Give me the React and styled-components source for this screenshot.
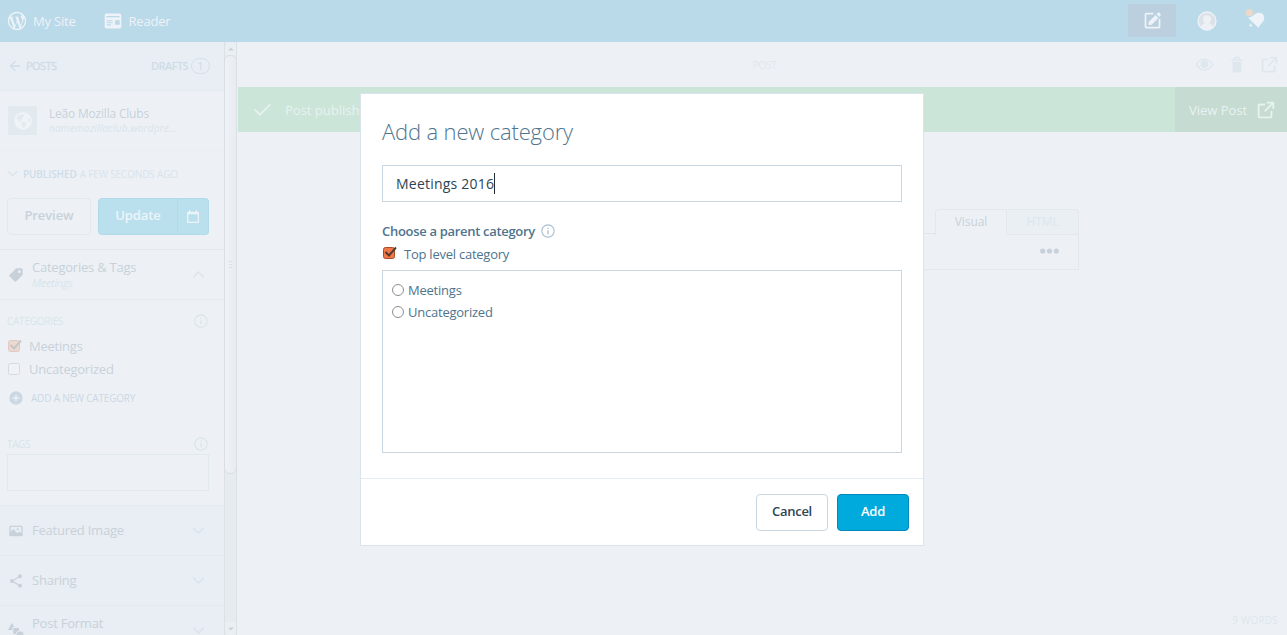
import React from "react";
import styled, { createGlobalStyle } from "styled-components";
import { FaGlobeAmericas } from "react-icons/fa";

const GlobalStyle = createGlobalStyle`
  * { box-sizing: border-box; }
  body {
    margin: 0;
    height: 635px;
    overflow: hidden;
    background: #edf1f6;
    font-family: "Open Sans", "Noto Sans", sans-serif;
    font-size: 13px;
    color: #c8d1d9;
  }
  svg { display: block; flex: none; }
`;

const PATHS = {
  wordpress:
    "M12 2C6.486 2 2 6.486 2 12s4.486 10 10 10 10-4.486 10-10S17.514 2 12 2zM3.5 12c0-1.232.264-2.402.736-3.46L8.29 19.65C5.456 18.272 3.5 15.365 3.5 12zm8.5 8.5c-.834 0-1.64-.12-2.4-.345l2.55-7.41 2.613 7.157c.017.042.038.08.06.117-.884.31-1.833.48-2.823.48zm1.172-12.485c.512-.027.973-.08.973-.08.458-.055.404-.728-.054-.702 0 0-1.376.108-2.265.108-.835 0-2.24-.107-2.24-.107-.458-.026-.51.674-.053.7 0 0 .434.055.892.082l1.324 3.63-1.86 5.578-3.096-9.208c.512-.027.973-.08.973-.08.458-.055.403-.728-.055-.702 0 0-1.376.108-2.265.108-.16 0-.347-.003-.547-.01C6.418 5.025 9.03 3.5 12 3.5c2.213 0 4.228.846 5.74 2.232-.037-.002-.072-.007-.11-.007-.835 0-1.427.727-1.427 1.51 0 .7.404 1.292.835 1.993.323.566.7 1.293.7 2.344 0 .727-.28 1.572-.646 2.748l-.848 2.833-3.072-9.138zm3.1 11.332l2.597-7.506c.484-1.212.645-2.18.645-3.044 0-.313-.02-.603-.057-.874.664 1.21 1.042 2.6 1.042 4.078 0 3.136-1.7 5.874-4.227 7.347z",
  reader: "M4 3h16a2 2 0 0 1 2 2v14a2 2 0 0 1-2 2H4a2 2 0 0 1-2-2V5a2 2 0 0 1 2-2zM4 6v1.6h16V6zM4.500 11v1.300h7V11zM4.500 13.500v1.300h7v-1.300zM4.500 16v1.300h5V16zM14.500 11v5.500H20V11z",
  create: "M21 14v5c0 1.105-.895 2-2 2H5c-1.105 0-2-.895-2-2V5c0-1.105.895-2 2-2h8v2H5v14h14v-5h2zM15.500 5.800L7.500 13.800V17h3.200l8-8zM16.600 4.700l3.200 3.200 1.300-1.300c.6-.6.6-1.500 0-2.100l-1.100-1.100c-.6-.6-1.500-.6-2.100 0zM19 10h2v4h-2z",
  external: "M19 13v6c0 1.105-.895 2-2 2H5c-1.105 0-2-.895-2-2V7c0-1.105.895-2 2-2h6v2H5v12h12v-6h2zM13 3v2h4.586l-7.793 7.793 1.414 1.414L19 6.414V11h2V3h-8z",
  tag: "M20 2.007h-7.087c-.53 0-1.04.21-1.414.586L2.592 11.5c-.78.78-.78 2.046 0 2.827l7.086 7.086c.78.78 2.046.78 2.827 0l8.906-8.906c.376-.374.587-.883.587-1.413V4.007c0-1.105-.895-2-2-2zM17.007 9c-1.105 0-2-.895-2-2s.895-2 2-2 2 .895 2 2-.895 2-2 2z",
  share: "M18 16c-.788 0-1.5.31-2.034.807L8.91 12.7c.05-.23.09-.46.09-.7s-.04-.47-.09-.7l7.05-4.11c.54.5 1.25.81 2.04.81 1.657 0 3-1.343 3-3s-1.343-3-3-3-3 1.343-3 3c0 .24.04.47.09.7L8.04 9.81C7.5 9.31 6.79 9 6 9c-1.657 0-3 1.343-3 3s1.343 3 3 3c.79 0 1.5-.31 2.04-.81l7.048 4.118c-.053.223-.088.453-.088.692 0 1.657 1.343 3 3 3s3-1.343 3-3-1.343-3-3-3z",
  trash: "M6.187 8h11.625l-.695 11.125C17.05 20.18 16.177 21 15.12 21H8.88c-1.057 0-1.93-.82-1.997-1.875L6.187 8zM19 5v2H5V5h3V4c0-1.105.895-2 2-2h4c1.105 0 2 .895 2 2v1h3zm-9 0h4V4h-4v1z",
  calendar: "M19 4h-1V2h-2v2H8V2H6v2H5c-1.105 0-2 .896-2 2v13c0 1.104.895 2 2 2h14c1.104 0 2-.896 2-2V6c0-1.104-.896-2-2-2zm0 15H5V8h14v11z",
  image: "M13 9.5c0-.828.672-1.5 1.5-1.5s1.5.672 1.5 1.5-.672 1.5-1.5 1.5-1.5-.672-1.5-1.5zM22 6v12c0 1.105-.895 2-2 2H4c-1.105 0-2-.895-2-2V6c0-1.105.895-2 2-2h16c1.105 0 2 .895 2 2zm-2 0H4v7.444L8 9l5.895 6.55 1.587-1.85c.798-.932 2.24-.932 3.037 0L20 15.426V6z",
  info: "M13 9h-2V7h2v2zm0 2h-2v6h2v-6zM12 3.600a8.400 8.400 0 1 0 0 16.800 8.400 8.400 0 0 0 0-16.800zM12 2c5.523 0 10 4.477 10 10s-4.477 10-10 10S2 17.523 2 12 6.477 2 12 2z",
  plus: "M12 2a10 10 0 1 0 0 20 10 10 0 0 0 0-20zM11 7h2v4h4v2h-4v4h-2v-4H7v-2h4z",
  back: "M20 11H7.828l5.586-5.586L12 4l-8 8 8 8 1.414-1.414L7.828 13H20v-2z",
  down: "M20 9l-8 8-8-8 1.414-1.414L12 14.172l6.586-6.586z",
  up: "M4 15l8-8 8 8-1.414 1.414L12 9.828l-6.586 6.586z",
  check: "M9 19.414l-6.707-6.707 1.414-1.414L9 16.586 20.293 5.293l1.414 1.414z",
  eye: "M12 5C5.500 5 1.500 12 1.500 12s4 7 10.500 7 10.500-7 10.500-7-4-7-10.500-7zm0 12.300c-4.500 0-7.200-3.900-8.200-5.300C4.800 10.600 7.500 6.700 12 6.700s7.200 3.900 8.200 5.300c-1 1.400-3.700 5.300-8.200 5.300z",
  shapes: "M6 0l3.500 6H6.500v4.500H0zM7.800 7.500h8.700v4a6 6 0 0 0-5 5H7.800zM18 12.800a5.400 5.400 0 1 1 0 10.800 5.400 5.400 0 0 1 0-10.800z",
};

function Icon({ name, size = 16, color = "currentColor", children }) {
  return (
    <svg width={size} height={size} viewBox="0 0 24 24" fill={color} fillRule="evenodd">
      <path d={PATHS[name]} />
      {children}
    </svg>
  );
}

/* Page shell */
const Page = styled.div`
  height: 635px;
  display: flex;
  flex-direction: column;
  overflow: hidden;
`;
const Masterbar = styled.header`
  height: 42px;
  flex: none;
  display: flex;
  align-items: center;
  background: #bad9e9;
  color: #edf3f8;
  padding: 0 21px 0 6px;
`;
const NavItem = styled.div`
  display: flex;
  align-items: center;
  gap: ${(p) => p.$gap}px;
  margin-right: 27px;
  font-size: 13px;
  letter-spacing: -0.2px;
  line-height: 20px;
`;
const NavEnd = styled.div`
  margin-left: auto;
  display: flex;
  align-items: center;
`;
const ComposeButton = styled.div`
  width: 48px;
  height: 33px;
  margin: -1px 21px 0 0;
  border-radius: 3px;
  background: #bbcfdf;
  display: grid;
  place-items: center;
`;
const BellSlot = styled.div`
  margin-left: 27px;
`;
const Body = styled.div`
  flex: 1;
  min-height: 0;
  display: flex;
`;

/* Sidebar */
const Sidebar = styled.aside`
  width: 224px;
  flex: none;
  overflow: hidden;
`;
const PostsBar = styled.div`
  height: 49px;
  display: flex;
  align-items: center;
  padding: 0 14px 0 7px;
  background: #e8eef3;
  border-bottom: 1px solid #e4ebf0;
  font-size: 11px;
  font-weight: 600;
  color: #cfdce7;
`;
const BackLabel = styled.span`
  margin: -2px 0 0 3px;
  font-weight: 400;
  letter-spacing: -0.55px;
  -webkit-text-stroke: 0.3px;
`;
const DraftsLabel = styled.span`
  margin: -2px 0 0 auto;
  letter-spacing: -0.6px;
`;
const Count = styled.span`
  width: 19px;
  height: 16px;
  margin-left: 3px;
  border: 1px solid #d6e0e8;
  border-radius: 9px;
  font-weight: 400;
  line-height: 14px;
  text-align: center;
`;
const SiteRow = styled.div`
  height: 60px;
  display: flex;
  padding: 15px 8px 0;
  border-bottom: 1px solid #e8eef3;
`;
const SiteIcon = styled.div`
  width: 29px;
  height: 29px;
  background: #e2eaf0;
  display: grid;
  place-items: center;
  color: #eff3f7;
`;
const SiteText = styled.div`
  margin: -1px 0 0 12px;
  font-size: 12px;
  letter-spacing: -0.2px;
  line-height: 17px;
`;
const SiteDomain = styled.div`
  font-size: 10px;
  line-height: 12px;
  font-style: italic;
  color: #d8e4eb;
  letter-spacing: 0.2px;
`;
const StatusPanel = styled.div`
  height: 99px;
  border-bottom: 1px solid #e1e9ee;
  padding: 14px 15px 0 7px;
`;
const StatusLine = styled.div`
  display: flex;
  align-items: center;
  height: 18px;
  font-size: 10px;
  letter-spacing: -0.15px;
  color: #d8e3ea;
  line-height: 16px;
  padding-bottom: 1px;
`;
const StatusChevron = styled.span`
  margin: 0 -1px 0 -2px;
`;
const StatusName = styled.b`
  font-weight: 600;
  color: #cfdce7;
  letter-spacing: -0.1px;
  margin: 0 3px 0 4px;
`;
const ActionRow = styled.div`
  display: flex;
  gap: 7px;
  margin-top: 15px;
`;
const FadedButton = styled.div`
  height: 37px;
  width: ${(p) => p.$width}px;
  border: 1px solid ${(p) => (p.$primary ? "#b2d9e8" : "#e0e9ee")};
  border-radius: ${(p) => p.$radius || "4px"};
  background: ${(p) => (p.$primary ? "#bae0ee" : "transparent")};
  color: ${(p) => (p.$primary ? "#edf4f8" : "#c8d1d9")};
  font-weight: 600;
  letter-spacing: -0.1px;
  line-height: 20px;
  display: flex;
  align-items: center;
  justify-content: center;
  padding-bottom: ${(p) => (p.$icon ? 0 : 3)}px;
  ${(p) => p.$icon && "border-left: 0;"}
`;
const SplitButton = styled.div`
  display: flex;
`;
const Accordion = styled.div`
  height: 50px;
  display: flex;
  align-items: center;
  padding: 0 17px 0 8px;
  background: ${(p) => (p.$open ? "#edf1f6" : "#e8eef3")};
  border-bottom: 1px solid #e3eaef;
`;
const AccordionText = styled.div`
  flex: 1;
  padding-bottom: ${(p) => p.$lift || 2}px;
  margin-left: 8px;
  line-height: 20px;
  letter-spacing: -0.23px;
`;
const AccordionSub = styled.div`
  font-size: 11px;
  line-height: 11px;
  font-style: italic;
  color: #d8e4ea;
  letter-spacing: -0.35px;
`;
const TaxonomyPanel = styled.div`
  height: 206px;
  padding: 13px 15px 0 7px;
  border-bottom: 1px solid #e3eaef;
`;
const PanelLabel = styled.div`
  height: 16px;
  display: flex;
  align-items: center;
  justify-content: space-between;
  font-size: 10px;
  letter-spacing: -0.25px;
  color: #d8e5e8;
`;
const CheckRow = styled.label`
  height: 23px;
  display: flex;
  align-items: center;
  gap: 7px;
  letter-spacing: -0.23px;
`;
const CategoryList = styled.div`
  padding-top: 5px;
`;
const AddCategory = styled.div`
  display: flex;
  align-items: center;
  gap: 7px;
  height: 16px;
  margin: 10px 0 30px;
  padding-left: 1px;
  font-size: 10px;
  letter-spacing: -0.2px;
  color: #cbd8e3;
`;
const TagInput = styled.div`
  height: 37px;
  margin-top: 2px;
  border: 1px solid #e0e9ee;
`;

/* Sidebar scroll track */
const ScrollTrack = styled.div`
  width: 13px;
  flex: none;
  display: flex;
  flex-direction: column;
  align-items: center;
  background: #e6ebef;
  border: solid #dbe1e6;
  border-width: 0 1px;
`;
const ScrollArrow = styled.div`
  height: 13px;
  width: 11px;
  flex: none;
  display: grid;
  place-items: center;
  background: #eaeff3;
  border-radius: ${(p) => (p.$down ? "0 0 5px 5px" : "5px 5px 0 0")};
`;
const ScrollThumb = styled.div`
  width: 13px;
  height: 419px;
  flex: none;
  border: 1px solid #d9dfe4;
  border-radius: 6px;
  background: linear-gradient(90deg, #eff3f7, #e8ecf0);
  display: flex;
  flex-direction: column;
  align-items: center;
  justify-content: center;
  gap: 2px;
`;
const Grip = styled.i`
  width: 3px;
  height: 1px;
  background: #d9e0e6;
`;
const ScrollGap = styled.div`
  flex: 1;
`;

/* Editor area */
const Editor = styled.main`
  flex: 1;
  margin-left: 1px;
  display: flex;
  flex-direction: column;
`;
const EditorBar = styled.div`
  height: 45px;
  display: grid;
  grid-template-columns: 1fr auto 1fr;
  align-items: center;
  padding: 0 7px 0 11px;
  font-size: 10px;
  letter-spacing: -0.2px;
  color: #e0e7ee;
`;
const EditorTools = styled.div`
  justify-self: end;
  display: flex;
  align-items: center;
  gap: 12px;
  color: #dfe7ee;
`;
const Notice = styled.div`
  height: 45px;
  display: flex;
  align-items: center;
  padding-left: 14px;
  background: #cbe5d9;
  color: #e8f2f1;
`;
const NoticeText = styled.div`
  margin-left: 12px;
`;
const ViewPost = styled.div`
  width: 112px;
  height: 45px;
  margin-left: auto;
  padding-left: 14px;
  display: flex;
  align-items: center;
  gap: 8px;
  background: #c6dbd2;
`;
const Canvas = styled.div`
  flex: 1;
  display: flex;
  flex-direction: column;
  padding: 77px 9px 6px 0;
`;
const ContentEditor = styled.div`
  width: 664px;
  margin-left: 177px;
`;
const Tabs = styled.div`
  display: flex;
  height: 26px;
`;
const TabFill = styled.div`
  flex: 1;
  height: 25px;
  border-bottom: 1px solid #e0e7ec;
`;
const Tab = styled.div`
  width: ${(p) => p.$width}px;
  border: 1px solid #e2e8ed;
  border-bottom-width: ${(p) => (p.$active ? 0 : 1)}px;
  border-radius: ${(p) => (p.$active ? "4px 0 0 0" : "0 4px 0 0")};
  border-right-width: ${(p) => (p.$active ? 0 : 1)}px;
  background: ${(p) => (p.$active ? "transparent" : "#eaeff4")};
  color: ${(p) => (p.$active ? "#c8d1d9" : "#dce6ee")};
  font-size: 12px;
  letter-spacing: -0.1px;
  line-height: 24px;
  text-align: center;
`;
const Toolbar = styled.div`
  height: 35px;
  width: 664px;
  border: 1px solid #e2e8ed;
  border-top: 0;
  padding: 0 19px 2px 0;
  display: flex;
  align-items: center;
  justify-content: flex-end;
`;
const WordCount = styled.div`
  margin: auto 0 0 auto;
  font-size: 10px;
  line-height: 17px;
  letter-spacing: 0.2px;
  color: #dce6ea;
`;

/* Dialog */
const Dialog = styled.div`
  position: absolute;
  left: 360px;
  top: 93px;
  width: 564px;
  height: 453px;
  border: 1px solid #d9e4ec;
  background: #fff;
  color: #4f748e;
  display: flex;
  flex-direction: column;
`;
const DialogContent = styled.div`
  height: 384px;
  padding: 21px 21px 0;
`;
const DialogTitle = styled.h1`
  margin: 0;
  font-size: 22px;
  font-weight: 300;
  letter-spacing: -0.15px;
  line-height: 32px;
`;
const NameInput = styled.div`
  height: 37px;
  margin-top: 18px;
  padding: 0 13px;
  border: 1px solid #c8d7e1;
  display: flex;
  align-items: center;
  color: #2e4453;
  font-size: 14px;
  letter-spacing: 0.22px;
`;
const Caret = styled.i`
  width: 1px;
  height: 21px;
  background: #222e36;
`;
const FieldLabel = styled.div`
  display: flex;
  align-items: center;
  gap: 5px;
  height: 20px;
  margin-top: 19px;
  font-size: 13px;
  font-weight: 600;
  letter-spacing: -0.31px;
`;
const TopLevel = styled.label`
  display: flex;
  align-items: center;
  gap: 7px;
  height: 22px;
  margin-top: 2px;
  letter-spacing: -0.24px;
`;
const CheckSlot = styled.span`
  margin-top: -2px;
`;
const ParentList = styled.div`
  height: 183px;
  margin-top: 5px;
  padding: 8px 9px;
  border: 1px solid #c8d7e1;
  letter-spacing: -0.23px;
`;
const RadioRow = styled.label`
  display: flex;
  align-items: center;
  gap: 4px;
  height: 22px;
`;
const Radio = styled.i`
  width: 12px;
  height: 12px;
  margin-top: -1px;
  border: 1px solid #8e8e8e;
  border-radius: 50%;
  background: #fff;
`;
const DialogFooter = styled.footer`
  flex: 1;
  display: flex;
  justify-content: flex-end;
  gap: 9px;
  padding: 15px 14px 0;
  border-top: 1px solid #e5edf2;
`;
const DialogButton = styled.button`
  width: 72px;
  height: 37px;
  padding: 0 0 3px;
  border: 1px solid ${(p) => (p.$primary ? "#0087be" : "#c8d7e1")};
  border-radius: 4px;
  background: ${(p) => (p.$primary ? "#00aadc" : "#fff")};
  color: ${(p) => (p.$primary ? "#fff" : "#2e4453")};
  font: 600 13px "Open Sans", sans-serif;
  letter-spacing: -0.3px;
`;

function Checkbox({ checked, faded }) {
  const mark = faded ? "#c7c5c5" : "#553a30";
  return (
    <svg width="15" height="14" viewBox="0 0 15 14">
      <rect
        x="1.500" y="1.500" width="11" height="11" rx="2"
        fill={checked ? (faded ? "#ecd9d2" : "#f07746") : "#eff2f6"}
        stroke={checked ? (faded ? "#e1c8c1" : "#a94c2c") : "#d4dadf"}
      />
      {checked && <path d="M3.500 6L7 9.500 14 1.500" fill="none" stroke={mark} strokeWidth="1.900" />}
    </svg>
  );
}

function NotificationBell() {
  return (
    <svg width="22" height="24" viewBox="0 0 22 24">
      <path d="M4 8.700C7 8.600 9.300 6.500 11.500 4.800c2.300-1.700 5.500-1.400 7.300.4 1.900 1.900 2 5 .3 7.200-1.500 2-4 3.800-4.400 6.700z" fill="#edf3f8" />
      <path d="M5.800 14.300l2.800 2.800c-.8.900-1.900.8-2.500.2-.7-.7-.9-2-.3-3z" fill="#edf3f8" />
      <circle cx="5.300" cy="3.700" r="3.600" fill="#ead8c9" />
    </svg>
  );
}

function Avatar() {
  return (
    <svg width="20" height="20" viewBox="0 0 20 20">
      <circle cx="10" cy="10" r="9" fill="#dce2e9" stroke="#eef3f7" strokeWidth="1.300" />
      <circle cx="10" cy="8.300" r="4.100" fill="#edf1f5" />
      <path d="M4 16.200c.6-2.800 3-4.200 6-4.200s5.400 1.400 6 4.200A9 9 0 0 1 10 18.800a9 9 0 0 1-6-2.600z" fill="#edf1f5" />
    </svg>
  );
}

function ScrollTriangle({ down }) {
  return (
    <svg width="6" height="4" viewBox="0 0 6 4">
      <path d={down ? "M0 .5h6L3 3.500z" : "M0 3.500h6L3 .5z"} fill="#cbd2d8" />
    </svg>
  );
}

export default function App() {
  return (
    <Page>
      <GlobalStyle />
      <Masterbar>
        <NavItem $gap={5}><Icon name="wordpress" size={22} />My Site</NavItem>
        <NavItem $gap={6}><Icon name="reader" size={20} />Reader</NavItem>
        <NavEnd>
          <ComposeButton><Icon name="create" size={21} /></ComposeButton>
          <Avatar />
          <BellSlot><NotificationBell /></BellSlot>
        </NavEnd>
      </Masterbar>
      <Body>
        <Sidebar>
          <PostsBar>
            <Icon name="back" size={16} />
            <BackLabel>POSTS</BackLabel>
            <DraftsLabel>DRAFTS</DraftsLabel>
            <Count>1</Count>
          </PostsBar>
          <SiteRow>
            <SiteIcon><FaGlobeAmericas size={18} /></SiteIcon>
            <SiteText>
              Leão Mozilla Clubs
              <SiteDomain>namemozillaclub.wordpre...</SiteDomain>
            </SiteText>
          </SiteRow>
          <StatusPanel>
            <StatusLine>
              <StatusChevron><Icon name="down" size={15} /></StatusChevron>
              <StatusName>PUBLISHED</StatusName> A FEW SECONDS AGO
            </StatusLine>
            <ActionRow>
              <FadedButton $width={84}>Preview</FadedButton>
              <SplitButton>
                <FadedButton $primary $width={80} $radius="4px 0 0 4px">Update</FadedButton>
                <FadedButton $primary $icon $width={31} $radius="0 4px 4px 0">
                  <Icon name="calendar" size={16} />
                </FadedButton>
              </SplitButton>
            </ActionRow>
          </StatusPanel>
          <Accordion $open>
            <Icon name="tag" size={16} />
            <AccordionText $lift={4}>
              Categories &amp; Tags
              <AccordionSub>Meetings</AccordionSub>
            </AccordionText>
            <Icon name="up" size={17} color="#dbe4eb" />
          </Accordion>
          <TaxonomyPanel>
            <PanelLabel>CATEGORIES<Icon name="info" size={16} /></PanelLabel>
            <CategoryList>
              <CheckRow><Checkbox checked faded />Meetings</CheckRow>
              <CheckRow><Checkbox faded />Uncategorized</CheckRow>
            </CategoryList>
            <AddCategory><Icon name="plus" size={16} />ADD A NEW CATEGORY</AddCategory>
            <PanelLabel>TAGS<Icon name="info" size={16} /></PanelLabel>
            <TagInput />
          </TaxonomyPanel>
          <Accordion>
            <Icon name="image" />
            <AccordionText>Featured Image</AccordionText>
            <Icon name="down" size={17} color="#dbe4eb" />
          </Accordion>
          <Accordion>
            <Icon name="share" />
            <AccordionText>Sharing</AccordionText>
            <Icon name="down" size={17} color="#dbe4eb" />
          </Accordion>
          <Accordion>
            <Icon name="shapes" />
            <AccordionText $lift={4}>
              Post Format
              <AccordionSub>Standard</AccordionSub>
            </AccordionText>
            <Icon name="down" size={17} color="#dbe4eb" />
          </Accordion>
        </Sidebar>
        <ScrollTrack>
          <ScrollArrow><ScrollTriangle /></ScrollArrow>
          <ScrollThumb><Grip /><Grip /><Grip /></ScrollThumb>
          <ScrollGap />
          <ScrollArrow $down><ScrollTriangle down /></ScrollArrow>
        </ScrollTrack>
        <Editor>
          <EditorBar>
            <span />
            POST
            <EditorTools>
              <Icon name="eye" size={21}><circle cx="12" cy="11.500" r="4.500" /></Icon>
              <Icon name="trash" size={20} />
              <Icon name="external" size={21} />
            </EditorTools>
          </EditorBar>
          <Notice>
            <Icon name="check" size={21} />
            <NoticeText>Post published!</NoticeText>
            <ViewPost>View Post<Icon name="external" size={22} /></ViewPost>
          </Notice>
          <Canvas>
            <ContentEditor>
              <Tabs>
                <TabFill />
                <Tab $active $width={71}>Visual</Tab>
                <Tab $width={73}>HTML</Tab>
              </Tabs>
              <Toolbar>
                <svg width="19" height="6" viewBox="0 0 19 6" fill="#c8d1d9">
                  <circle cx="2.700" cy="3" r="2.600" />
                  <circle cx="9.500" cy="3" r="2.600" />
                  <circle cx="16.300" cy="3" r="2.600" />
                </svg>
              </Toolbar>
            </ContentEditor>
            <WordCount>9 WORDS</WordCount>
          </Canvas>
        </Editor>
      </Body>
      <Dialog role="dialog">
        <DialogContent>
          <DialogTitle>Add a new category</DialogTitle>
          <NameInput>Meetings 2016<Caret /></NameInput>
          <FieldLabel>Choose a parent category<Icon name="info" size={16} color="#a8bece" /></FieldLabel>
          <TopLevel><CheckSlot><Checkbox checked /></CheckSlot>Top level category</TopLevel>
          <ParentList>
            <RadioRow><Radio />Meetings</RadioRow>
            <RadioRow><Radio />Uncategorized</RadioRow>
          </ParentList>
        </DialogContent>
        <DialogFooter>
          <DialogButton>Cancel</DialogButton>
          <DialogButton $primary>Add</DialogButton>
        </DialogFooter>
      </Dialog>
    </Page>
  );
}
